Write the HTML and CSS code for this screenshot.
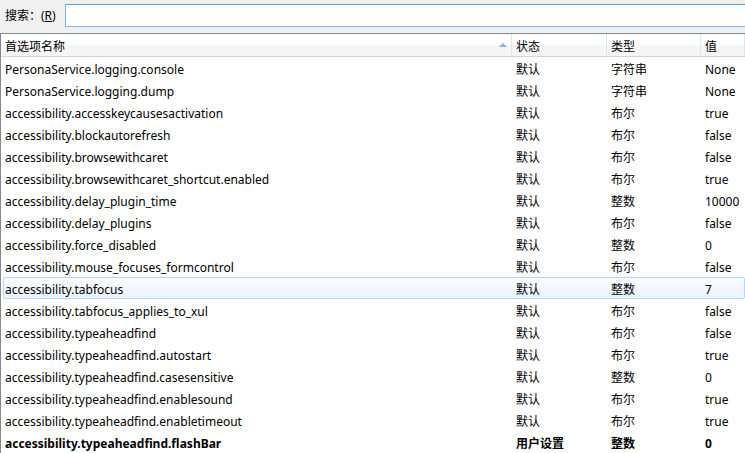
FILE: index.html
```html
<!DOCTYPE html>
<html lang="zh-CN">
<head>
    <meta charset="UTF-8">
    <title>about:config</title>
    <link rel="stylesheet" href="styles.css">
</head>
<body>

    <div class="search-bar">
        <label for="filter">搜索：(<u>R</u>)</label>
        <input type="text" id="filter" class="search-input">
    </div>

    <div class="tree">
        <div class="tree-head">
            <div class="col col-name">首选项名称<span class="sort-arrow"></span></div>
            <div class="col">状态</div>
            <div class="col">类型</div>
            <div class="col">值</div>
        </div>

        <div class="row"><div class="col col-name">PersonaService.logging.console</div><div class="col">默认</div><div class="col">字符串</div><div class="col">None</div></div>
        <div class="row"><div class="col col-name">PersonaService.logging.dump</div><div class="col">默认</div><div class="col">字符串</div><div class="col">None</div></div>
        <div class="row"><div class="col col-name">accessibility.accesskeycausesactivation</div><div class="col">默认</div><div class="col">布尔</div><div class="col">true</div></div>
        <div class="row"><div class="col col-name">accessibility.blockautorefresh</div><div class="col">默认</div><div class="col">布尔</div><div class="col">false</div></div>
        <div class="row"><div class="col col-name">accessibility.browsewithcaret</div><div class="col">默认</div><div class="col">布尔</div><div class="col">false</div></div>
        <div class="row"><div class="col col-name">accessibility.browsewithcaret_shortcut.enabled</div><div class="col">默认</div><div class="col">布尔</div><div class="col">true</div></div>
        <div class="row"><div class="col col-name">accessibility.delay_plugin_time</div><div class="col">默认</div><div class="col">整数</div><div class="col">10000</div></div>
        <div class="row"><div class="col col-name">accessibility.delay_plugins</div><div class="col">默认</div><div class="col">布尔</div><div class="col">false</div></div>
        <div class="row"><div class="col col-name">accessibility.force_disabled</div><div class="col">默认</div><div class="col">整数</div><div class="col">0</div></div>
        <div class="row"><div class="col col-name">accessibility.mouse_focuses_formcontrol</div><div class="col">默认</div><div class="col">布尔</div><div class="col">false</div></div>
        <div class="row row-hover"><div class="col col-name">accessibility.tabfocus</div><div class="col">默认</div><div class="col">整数</div><div class="col">7</div></div>
        <div class="row"><div class="col col-name">accessibility.tabfocus_applies_to_xul</div><div class="col">默认</div><div class="col">布尔</div><div class="col">false</div></div>
        <div class="row"><div class="col col-name">accessibility.typeaheadfind</div><div class="col">默认</div><div class="col">布尔</div><div class="col">false</div></div>
        <div class="row"><div class="col col-name">accessibility.typeaheadfind.autostart</div><div class="col">默认</div><div class="col">布尔</div><div class="col">true</div></div>
        <div class="row"><div class="col col-name">accessibility.typeaheadfind.casesensitive</div><div class="col">默认</div><div class="col">整数</div><div class="col">0</div></div>
        <div class="row"><div class="col col-name">accessibility.typeaheadfind.enablesound</div><div class="col">默认</div><div class="col">布尔</div><div class="col">true</div></div>
        <div class="row"><div class="col col-name">accessibility.typeaheadfind.enabletimeout</div><div class="col">默认</div><div class="col">布尔</div><div class="col">true</div></div>
        <div class="row row-modified"><div class="col col-name">accessibility.typeaheadfind.flashBar</div><div class="col">用户设置</div><div class="col">整数</div><div class="col">0</div></div>
    </div>

</body>
</html>
```

FILE: styles.css
```css
body {
    margin: 0;
    font-family: "Noto Sans", "Noto Sans CJK SC", sans-serif;
    font-size: 12px;
    color: #000000;
    background-color: #ffffff;
    overflow: hidden;
}

.search-bar {
    height: 33px;
    background-color: #f0f0f0;
    display: flex;
    align-items: center;
    padding-left: 5px;
    box-sizing: border-box;
    padding-bottom: 3px;
}

.search-bar label {
    width: 60px;
    white-space: nowrap;
}

.search-input {
    flex: 1;
    height: 23px;
    margin: 0;
    border: 1px solid #7eb4ea;
    border-top-color: #569de5;
    border-right: none;
    background-color: #ffffff;
    box-sizing: border-box;
    outline: none;
}

.tree {
    border-top: 1px solid #828790;
    border-left: 1px solid #828790;
    background-color: #ffffff;
}

.tree-head,
.row {
    display: grid;
    grid-template-columns: 511px 95px 94px 1fr;
    height: 22px;
    align-items: center;
}

.tree-head {
    height: 23px;
    background: linear-gradient(#ffffff 50%, #f4f5f7 50%);
    border-bottom: 1px solid #d5d5d5;
    box-sizing: border-box;
}

.tree-head .col {
    height: 100%;
    display: flex;
    align-items: center;
    border-right: 1px solid #e3e4e6;
    position: relative;
    box-sizing: border-box;
}

.col {
    padding-left: 4px;
    padding-top: 2px;
    white-space: nowrap;
    overflow: hidden;
}

.sort-arrow {
    position: absolute;
    right: 4px;
    top: 9px;
    width: 0;
    height: 0;
    border-left: 4px solid transparent;
    border-right: 4px solid transparent;
    border-bottom: 4px solid #8fb4d9;
}

.row-hover {
    margin-left: 2px;
    border: 1px solid #b8d6fb;
    border-radius: 2px;
    background: linear-gradient(#fafbfd, #ebf3fd);
    grid-template-columns: 508px 95px 94px 1fr;
    box-sizing: border-box;
}

.row-hover .col-name {
    padding-left: 1px;
}

.row-modified {
    font-weight: bold;
}
```
